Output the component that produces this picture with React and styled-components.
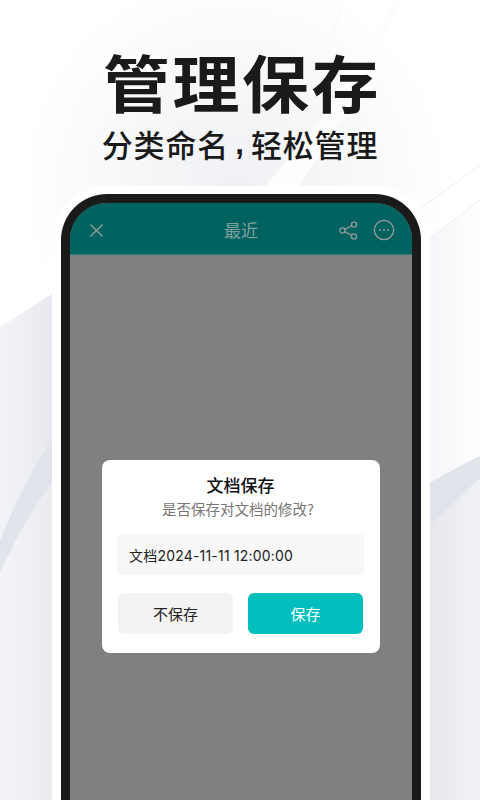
import styled, {createGlobalStyle} from "styled-components";

const App = () => {
  return (
    <>
      <GlobalStyle />
      <Page>
        <Backdrop viewBox="0 0 480 800" preserveAspectRatio="none">
          <defs>
            <radialGradient id="glow" gradientUnits="userSpaceOnUse" cx="235" cy="185" r="215">
              <stop offset="0" stopColor="#f0f1f4" />
              <stop offset="0.55" stopColor="#f7f8f9" />
              <stop offset="1" stopColor="#ffffff" />
            </radialGradient>
            <linearGradient id="rightWash" x1="0" y1="0" x2="1" y2="0">
              <stop offset="0" stopColor="#f5f6f9" />
              <stop offset="1" stopColor="#ffffff" />
            </linearGradient>
            <linearGradient id="leftFold" x1="0" y1="0" x2="1" y2="0">
              <stop offset="0" stopColor="#f3f4f7" />
              <stop offset="1" stopColor="#e8e9ee" />
            </linearGradient>
            <linearGradient id="lowerFold" x1="0" y1="0" x2="1" y2="0">
              <stop offset="0" stopColor="#f3f4f7" />
              <stop offset="1" stopColor="#ebecf0" />
            </linearGradient>
            <linearGradient id="rightFold" x1="0" y1="0" x2="1" y2="0">
              <stop offset="0" stopColor="#e7e8ee" />
              <stop offset="1" stopColor="#f1f2f5" />
            </linearGradient>
          </defs>
          <rect width="480" height="800" fill="#ffffff" />
          <rect width="480" height="400" fill="url(#glow)" />
          <path d="M265 186C315 130 360 70 395 0H400C375 70 335 130 300 186Z" fill="#fdfdfe" />
          <path d="M345 0C325 60 290 120 250 150" stroke="#f6f7f8" fill="none" />
          <path d="M430 238L480 200V456L430 483Z" fill="url(#rightWash)" />
          <path d="M418 210L480 165M430 238L480 200" stroke="#eeeff2" fill="none" />
          <path d="M0 327L52 294V800H0Z" fill="url(#leftFold)" />
          <path d="M0 540C14 505 32 470 52 438V483C30 512 14 542 0 573Z" fill="#e2e4eb" />
          <path d="M0 573C14 542 30 512 52 483V800H0Z" fill="url(#lowerFold)" />
          <path d="M430 483C447 473 465 463 480 456V800H430Z" fill="url(#rightFold)" />
          <path d="M430 483C447 473 465 463 480 456V478L430 525Z" fill="#e2e4eb" />
        </Backdrop>
        <Heading>管理保存</Heading>
        <Subheading>
          分类命名<Comma>,</Comma>轻松管理
        </Subheading>
        <PhoneHalo>
          <PhoneFrame>
            <Screen>
              <TopBar>
                <BarSide>
                  <CloseIcon viewBox="0 0 16 16">
                    <path d="M1.5 1.5L14.5 14.5M14.5 1.5L1.5 14.5" />
                  </CloseIcon>
                </BarSide>
                <TopTitle>最近</TopTitle>
                <BarSide $end>
                  <ShareIcon viewBox="0 0 20 20">
                    <circle cx="15.8" cy="3.8" r="2.7" />
                    <circle cx="3.6" cy="10" r="2.7" />
                    <circle cx="15.8" cy="16.2" r="2.7" />
                    <path d="M6 8.8L13.4 5M6 11.2L13.4 15" />
                  </ShareIcon>
                  <MoreIcon viewBox="0 0 22 22">
                    <circle cx="11" cy="11" r="9.6" />
                    <circle className="dot" cx="6.8" cy="11" r="1" />
                    <circle className="dot" cx="11" cy="11" r="1" />
                    <circle className="dot" cx="15.2" cy="11" r="1" />
                  </MoreIcon>
                </BarSide>
              </TopBar>
              <Overlay>
                <Dialog>
                  <DialogTitle>文档保存</DialogTitle>
                  <DialogText>是否保存对文档的修改?</DialogText>
                  <NameField>文档2024-11-11 12:00:00</NameField>
                  <ButtonRow>
                    <DialogButton>不保存</DialogButton>
                    <DialogButton $primary>保存</DialogButton>
                  </ButtonRow>
                </Dialog>
              </Overlay>
            </Screen>
          </PhoneFrame>
        </PhoneHalo>
      </Page>
    </>
  );
};

export default App;

const GlobalStyle = createGlobalStyle`
  html, body {
    margin: 0;
    padding: 0;
    overflow: hidden;
  }
  body {
    font-family: "Noto Sans CJK SC", "Liberation Sans", sans-serif;
  }
`;

const Page = styled.div`
  position: relative;
  display: flex;
  flex-direction: column;
  align-items: center;
  width: 480px;
  height: 800px;
  overflow: hidden;
`;

const Backdrop = styled.svg`
  position: absolute;
  top: 0;
  left: 0;
  width: 480px;
  height: 800px;
`;

const Heading = styled.h1`
  position: relative;
  margin: 41px 0 0 4px;
  font-size: 67px;
  line-height: 80px;
  font-weight: 700;
  letter-spacing: 2.5px;
  color: #1a1a1a;
  transform: scaleY(0.93);
`;

const Subheading = styled.h2`
  position: relative;
  display: flex;
  margin: 1px 0 0;
  font-size: 31px;
  line-height: 44px;
  font-weight: 500;
  letter-spacing: 0.8px;
  color: #1a1a1a;
`;

const Comma = styled.span`
  width: 22px;
  text-align: center;
  font-family: "Liberation Sans", sans-serif;
  font-weight: 700;
`;

const PhoneHalo = styled.div`
  position: relative;
  box-sizing: border-box;
  width: 378px;
  height: 700px;
  margin: 20px 0 0 2px;
  padding: 8px 9px 0;
  flex-shrink: 0;
  background: #ffffff;
  border-radius: 55px 55px 0 0;
`;

const PhoneFrame = styled.div`
  box-sizing: border-box;
  height: 100%;
  padding: 9px 9px 0;
  background: #1a1a1a;
  border-radius: 46px 46px 0 0;
`;

const Screen = styled.div`
  display: flex;
  flex-direction: column;
  height: 100%;
  overflow: hidden;
  background: #808080;
  border-radius: 37px 37px 0 0;
`;

const TopBar = styled.div`
  display: grid;
  grid-template-columns: 1fr auto 1fr;
  align-items: center;
  height: 52px;
  padding: 3px 17px 0 19px;
  box-sizing: border-box;
  flex-shrink: 0;
  background: #006360;
  border-bottom: 1px solid #2f7f7c;
`;

const BarSide = styled.div`
  display: flex;
  align-items: center;
  justify-content: ${props => (props.$end ? "flex-end" : "flex-start")};
`;

const CloseIcon = styled.svg`
  width: 15px;
  height: 15px;
  fill: none;
  stroke: #959a98;
  stroke-width: 1.5;
`;

const TopTitle = styled.div`
  margin-right: 2px;
  font-size: 17px;
  line-height: 22px;
  color: #80a09e;
`;

const ShareIcon = styled.svg`
  width: 19px;
  height: 19px;
  margin-right: 15px;
  fill: none;
  stroke: #959a98;
  stroke-width: 1.4;
`;

const MoreIcon = styled.svg`
  width: 22px;
  height: 22px;
  fill: none;
  stroke: #959a98;
  stroke-width: 1.4;

  .dot {
    fill: #959a98;
    stroke: none;
  }
`;

const Overlay = styled.div`
  flex: 1;
  padding: 205px 32px 0;
`;

const Dialog = styled.div`
  box-sizing: border-box;
  width: 278px;
  height: 193px;
  padding: 14px 16px 0 15px;
  background: #ffffff;
  border-radius: 8px;
`;

const DialogTitle = styled.div`
  text-align: center;
  font-size: 17px;
  line-height: 22px;
  font-weight: 500;
  color: #111111;
`;

const DialogText = styled.div`
  margin-top: 3px;
  padding-right: 5px;
  text-align: center;
  font-size: 14.5px;
  line-height: 20px;
  color: #777777;
`;

const NameField = styled.div`
  display: flex;
  align-items: center;
  height: 41px;
  margin-top: 15px;
  padding-left: 12px;
  background: #f7f7f7;
  border-radius: 4px;
  font-family: "Inter", "Noto Sans CJK SC", sans-serif;
  font-size: 14px;
  letter-spacing: 0.2px;
  color: #222222;
`;

const ButtonRow = styled.div`
  display: flex;
  gap: 15px;
  margin: 18px 1px 0;
`;

const DialogButton = styled.div`
  display: flex;
  align-items: center;
  justify-content: center;
  flex: 1;
  height: 41px;
  border-radius: 6px;
  font-size: 15px;
  background: ${props => (props.$primary ? "#00bfbd" : "#f3f3f3")};
  color: ${props => (props.$primary ? "#ffffff" : "#222222")};
`;
